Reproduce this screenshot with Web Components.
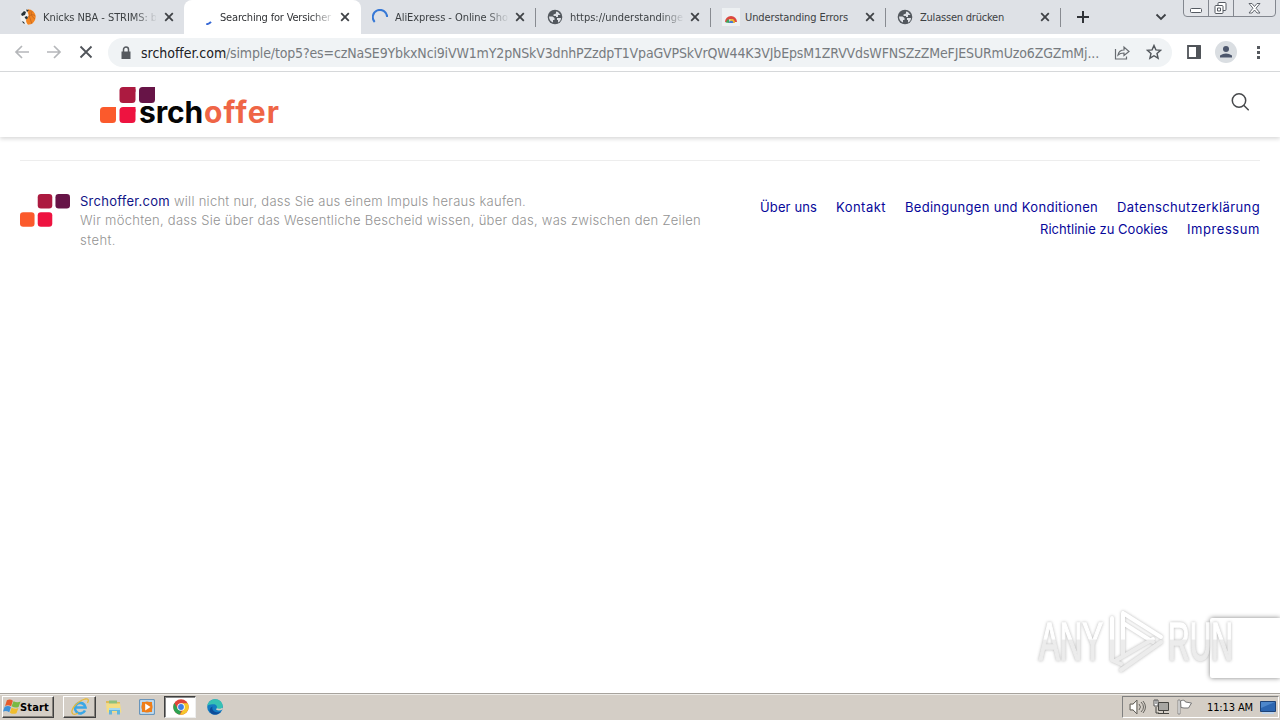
<!DOCTYPE html>
<html lang="de">
<head>
<meta charset="utf-8">
<title>srchoffer</title>
<style>
html, body { margin: 0; height: 100%; overflow: hidden; background: #fff; }
body { font-family: "DejaVu Sans Condensed", "DejaVu Sans", sans-serif; }
</style>
</head>
<body>
<desktop-screen></desktop-screen>
<script>
// shared drawings, used by several elements
const ICONS = {
    ball: `<svg width="16" height="16" viewBox="0 0 16 16"><circle cx="8" cy="8" r="7.7" fill="#f0f1f0"/><path d="M8 .3a7.7 7.7 0 0 1 0 15.4C5 12 6 10 8 8S6 3 8 .3z" fill="#f28522"/><path d="M1 5l3-3 2 1-1 3-3 1zM4.500 8 7 7l1 2-2 1.500zM2 12l2 1 1 2-2-1zM6 .6 9 1 7 3z" fill="#273338"/><path d="M10 1q-2 7 2 14M8 8q4-4 7.5-1M12 2q-2 5 3 8" fill="none" stroke="#b55e1c" stroke-width=".6"/></svg>`,
    load1: `<svg width="16" height="16" viewBox="0 0 16 16"><path d="M9.200 15.400q3-.6 4.800-2.600" fill="none" stroke="#3769d6" stroke-width="2"/></svg>`,
    load2: `<svg width="16" height="16" viewBox="0 0 16 16"><path d="M2.700 13A7.2 7.2 0 1 1 15.200 8" fill="none" stroke="#3678d6" stroke-width="2"/></svg>`,
    globe: `<svg width="16" height="16" viewBox="0 0 16 16"><circle cx="8" cy="8" r="7.3" fill="#53585e"/><path d="M2 7.500h3.500l2 1.500v2H6v2.500C3.500 12.500 2 10.500 2 7.500zM9 2.500l2 .5 2.500 3H11v2H9V7H6.500V5.500L9 4.500zM10 9h4c0 2.500-1.500 4-3 4.500V11h-1z" fill="#dee1e6"/></svg>`,
    rainbow: `<svg width="18" height="18" viewBox="0 0 18 18"><path fill="#edf0f2" d="M0 0h18v18H0z"/><path d="M3 14a6 6 0 0 1 12 0h-3a3 3 0 0 0-6 0z" fill="#dc4840"/><path d="M3.500 14.500 6 11q2 1 1.500 4z" fill="#3fa45b"/><path d="M7.500 11.500q5-2 5.500 3.500h-3z" fill="#edb72f"/><path d="M7 15a2.2 2.2 0 0 1 4.400 0z" fill="#477bd2"/></svg>`,
    chrome: `<svg width="16" height="16" viewBox="0 0 16 16"><circle cx="8" cy="8" r="7.7" fill="#e0453a"/><path d="M1.300 4.100 5 10.200 8 11.500 7 15.600A7.7 7.7 0 0 1 1.300 4.100z" fill="#2da252"/><path d="M8 4.200h6.700A7.7 7.7 0 0 1 7 15.600l4-6z" fill="#f6c72b"/><circle cx="8" cy="8" r="3.8" fill="#fff"/><circle cx="8" cy="8" r="2.9" fill="#3f7fe5"/></svg>`,
    ie: `<svg width="18" height="18" viewBox="0 0 18 18"><path d="M14 12.500A5.3 5.3 0 1 1 14.500 9.500H5" fill="none" stroke="#3ba7e6" stroke-width="2.600"/><path d="M2 16C-2 13 5 4 14 1q5-1 2.500 4M2 16q2 1 5-1" fill="none" stroke="#e5b93c" stroke-width="1.300"/></svg>`,
    folder: `<svg width="18" height="18" viewBox="0 0 18 18"><path d="M1 5V3h5l1 1h8v3z" fill="#dfbb57"/><path d="M4 2.500h8V6H4z" fill="#8cbf7c"/><path d="M1 5.500h14l1.500 9H2z" fill="#f4dd83"/><path d="M4 16.500V11h11v5.500h-3V13H7v3.500z" fill="#62b6dc"/><path d="M4 10h11v2H4z" fill="#a7d9ee"/></svg>`,
    media: `<svg width="16" height="16" viewBox="0 0 16 16"><path d="M.7.7h14.600v14.600H.7z" fill="#d6e9f7" stroke="#5187b6"/><path d="M2.500 2.500h11v11h-11z" fill="#94bee0"/><path d="M3 3h10v10H3z" fill="#ef7e19"/><circle cx="8" cy="8" r="5.600" fill="#ef7e19"/><path d="m6.200 4.500 5.300 3.500-5.300 3.500z" fill="#fff"/></svg>`,
    edge: `<svg width="18" height="18" viewBox="0 0 18 18"><circle cx="9" cy="9" r="7.800" fill="#147cc2"/><path d="M1.300 8C2 3.500 6 .9 10 1.300c4 .5 7 3.700 6.700 7.200-.2 2.600-3.700 4-6.300 2.600 1.400-2 .2-4.300-2-4.800C5 5.800 2.500 6.500 1.300 8z" fill="#36c2b4"/><path d="M6.500 8.500c-1.200 4 3 7.500 8.500 5-3 4.300-9 3.800-11 .5-1-2 0-4.500 2.500-5.500z" fill="#0d4c9a"/><path d="M10.400 11.100q3.300 1.400 6.200-.8" stroke="#d4d0c8" stroke-width="1.600" fill="none"/></svg>`,
    flag: `<svg width="18" height="18" viewBox="0 0 18 18"><g transform="rotate(8 9 9)"><path d="M3 3q3-2 6-.4L8 8.500Q5 7 2 9z" fill="#e65b2c"/><path d="M9.700 3q4 1.500 7-.7L15.500 8q-3 2-7 .4z" fill="#79b943"/><path d="M1.700 9.700q4-2 6.300-.3l-1 5.300q-3-1.700-6.300 0z" fill="#3f91d8"/><path d="M8.700 9.500q4 1.500 6.800-.4l-1.200 5.400q-3 2-6.600.4z" fill="#f0bd2e"/></g></svg>`
};

function make(name, css, html) {
    customElements.define(name, class extends HTMLElement {
        constructor() {
            super();
            this.attachShadow({mode: 'open'});
            this.shadowRoot.innerHTML = `<style>:host { display: block; box-sizing: border-box; } ${css}</style>${html}`;
        }
    });
}

// text run with a set width, spread with letter spacing
class FitText extends HTMLElement {
    constructor() {
        super();
        this.attachShadow({mode: 'open'});
        this.shadowRoot.innerHTML = `<style>
        :host { display: inline-block; white-space: pre; }
        span { display: inline-block; }
        </style><span><slot></slot></span>`;
    }

    connectedCallback() {
        const wanted = Number(this.getAttribute('w'));
        const span = this.shadowRoot.querySelector('span');
        const extra = wanted - span.getBoundingClientRect().width;
        span.style.letterSpacing = (extra / this.textContent.length) + 'px';
        this.style.width = wanted + 'px';
    }
}

class ShapeIcon extends HTMLElement {
    constructor() {
        super();
        this.attachShadow({mode: 'open'});
    }

    connectedCallback() {
        this.shadowRoot.innerHTML = `<style>:host { display: inline-flex; } svg { display: block; }</style>${ICONS[this.getAttribute('name')]}`;
    }
}

class BrowserTab extends HTMLElement {
    constructor() {
        super();
        this.attachShadow({mode: 'open'});
        this.shadowRoot.innerHTML = `<style>
        :host { display: flex; align-items: center; box-sizing: border-box; flex: none; width: 175px; height: 34px; padding: 0 9px 0 12px; position: relative; font-size: 11px; color: #3c4043; }
        :host([first]) { width: 176px; }
        :host([active]) { width: 177px; padding: 0 10px 0 13px; background: #fff; border-radius: 8px 8px 0 0; color: #303235; }
        :host([next]) { width: 174px; padding-left: 11px; }
        :host([line])::after { content: ""; position: absolute; right: -1px; top: 8px; width: 1px; height: 19px; background: #888b91; }
        .icon { width: 18px; flex: none; display: flex; }
        .title { margin-left: 5px; width: 113px; flex: none; overflow: hidden; white-space: nowrap; line-height: 18px; padding-top: 1px; }
        :host([fade]) .title { -webkit-mask-image: linear-gradient(90deg, #000 80%, #0001 100%); mask-image: linear-gradient(90deg, #000 80%, #0001 100%); }
        .close { margin-left: auto; margin-right: 1px; }
        </style>
        <div class="icon"><slot name="icon"></slot></div>
        <div class="title"><slot></slot></div>
        <svg class="close" width="10" height="10" viewBox="0 0 10 10"><path d="m1.200 1.200 7.600 7.600m0-7.600L1.200 8.800" stroke="#3f4246" stroke-width="1.800"/></svg>`;
    }
}

customElements.define('fit-text', FitText);
customElements.define('shape-icon', ShapeIcon);
customElements.define('browser-tab', BrowserTab);

make('window-buttons', `
:host { position: absolute; right: 4px; top: 0; width: 93px; height: 17px; }
svg { display: block; }`, `
<svg width="93" height="17" viewBox="0 0 93 17"><path d="M.5 0v13q0 3.500 3.500 3.500h85q3.500 0 3.500-3.500V0M25.500 0v16M50.500 0v16" fill="#e3e5e9" stroke="#83878f"/>
<g fill="#fff" stroke="#555a62"><rect x="7.500" y="8.500" width="11" height="4" rx="1"/><rect x="35" y="2.500" width="8" height="8" rx="1"/><rect x="32" y="5.500" width="8" height="8" rx="1"/><path d="M34.500 8h3v3h-3z"/><path d="M66 3.500h3l2.500 3 2.500-3h3l-4 4.700 4 4.800h-3L71.500 10 69 13h-3l4-4.800z" stroke-width=".9"/></g></svg>`);

make('tab-strip', `
:host { display: flex; height: 34px; padding-left: 8px; background: #dee1e6; position: relative; }
.plus { margin: 10px 0 0 16px; }
.down { margin: 13px 0 0 65px; }`, `
<browser-tab first fade><shape-icon slot="icon" name="ball"></shape-icon><fit-text w="114">Knicks NBA - STRIMS: b</fit-text></browser-tab>
<browser-tab active fade><shape-icon slot="icon" name="load1"></shape-icon><fit-text w="111">Searching for Versicher</fit-text></browser-tab>
<browser-tab next line fade><shape-icon slot="icon" name="load2"></shape-icon><fit-text w="113">AliExpress - Online Sho</fit-text></browser-tab>
<browser-tab line fade><shape-icon slot="icon" name="globe"></shape-icon><fit-text w="113">https://understandinge</fit-text></browser-tab>
<browser-tab line><shape-icon slot="icon" name="rainbow"></shape-icon><fit-text w="103">Understanding Errors</fit-text></browser-tab>
<browser-tab line><shape-icon slot="icon" name="globe"></shape-icon><fit-text w="84">Zulassen drücken</fit-text></browser-tab>
<svg class="plus" width="14" height="14"><path d="M7 1v12M1 7h12" stroke="#303338" stroke-width="2"/></svg>
<svg class="down" width="12" height="9"><path d="m1.500 1.500 4.500 4.500 4.500-4.500" fill="none" stroke="#3d4045" stroke-width="1.800"/></svg>
<window-buttons></window-buttons>`);

make('address-bar', `
:host { display: flex; align-items: center; height: 29px; width: 1064px; border-radius: 15px; background: #f0f3f5; padding-left: 12px; color: #777b7f; font-size: 14px; flex: none; }
.url { display: flex; margin-left: 9px; line-height: 20px; width: 959px; }
.host { color: #202124; }
.share { margin-left: 14px; }
.star { margin-left: 15px; position: relative; top: -1px; }`, `
<svg width="12" height="14" viewBox="0 0 12 14"><path d="M1.500 5.500h9V13h-9z" fill="#55595e"/><path d="M3.500 6V3.500a2.500 2.500 0 0 1 5 0V6" fill="none" stroke="#55595e" stroke-width="1.500"/></svg>
<div class="url"><fit-text class="host" w="85">srchoffer.com</fit-text><fit-text w="873">/simple/top5?es=czNaSE9YbkxNci9iVW1mY2pNSkV3dnhPZzdpT1VpaGVPSkVrQW44K3VJbEpsM1ZRVVdsWFNSZzZMeFJESURmUzo6ZGZmMj...</fit-text></div>
<svg class="share" width="17" height="16" viewBox="0 0 17 16"><path d="M1.500 4v10h11v-2.500M4 10q1-5 6-5V2l5 4.500-5 4V8Q6 8 4 10z" fill="none" stroke="#686c71" stroke-width="1.200"/></svg>
<svg class="star" width="16" height="16" viewBox="0 0 16 16"><path d="m8 1.500 1.900 4.400 4.800.4-3.700 3.200 1.100 4.700L8 11.700l-4.100 2.500L5 9.500 1.300 6.300l4.800-.4z" fill="none" stroke="#51565b" stroke-width="1.400"/></svg>`);

make('browser-toolbar', `
:host { display: flex; align-items: center; height: 38px; background: #fff; border-bottom: 1px solid #d6d8da; padding-left: 14px; }
.nav { display: flex; gap: 16px; width: 94px; flex: none; position: relative; top: -1px; }
.panel { margin-left: 15px; position: relative; top: -1px; }
.user { margin-left: 14px; position: relative; top: -1px; }
.dots { margin-left: 19px; }`, `
<div class="nav">
<svg width="16" height="16"><path d="M15 8H2m6-6L2 8l6 6" fill="none" stroke="#b5b7ba" stroke-width="1.700"/></svg>
<svg width="16" height="16"><path d="M1 8h13M8 2l6 6-6 6" fill="none" stroke="#b5b7ba" stroke-width="1.700"/></svg>
<svg width="16" height="16"><path d="m2.500 2.500 11 11m0-11-11 11" stroke="#505459" stroke-width="1.800"/></svg>
</div>
<address-bar></address-bar>
<svg class="panel" width="14" height="14"><path d="M1 1h12v12H1z" fill="#fff" stroke="#505459" stroke-width="1.800"/><path d="M9 1h5v12H9z" fill="#505459"/></svg>
<svg class="user" width="22" height="22"><circle cx="11" cy="11" r="11" fill="#dadee2"/><circle cx="11" cy="8" r="3" fill="#4c566c"/><path d="M5 16.500v-2q6-4 12 0v2z" fill="#4c566c"/></svg>
<svg class="dots" width="5" height="16"><path d="M1 1h3v3H1zm0 5h3v3H1zm0 5h3v3H1z" fill="#55595e"/></svg>`);

make('square-mark', `
svg { display: block; width: 100%; height: auto; }
.cut { opacity: var(--cut, 0); }`, `
<svg viewBox="0 0 55 36"><g fill="#fb5a2c"><rect y="20" width="16" height="16" rx="3.500"/><path class="cut" d="M11 20h5v5z"/></g>
<g fill="#ee1340"><rect x="19.500" y="20" width="16" height="16" rx="3.500"/><path class="cut" d="M30.500 20h5v5z"/></g>
<g fill="#ac1a40"><rect x="19.500" width="16" height="16" rx="3.500"/><path class="cut" d="M30.500 0h5v5z"/></g>
<g fill="#671447"><rect x="39" width="16" height="16" rx="3.500"/><path class="cut" d="M50 0h5v5z"/></g></svg>`);

make('site-logo', `
:host { position: relative; width: 180px; height: 37px; --cut: 1; }
square-mark { width: 55px; }
.name { position: absolute; left: 39px; top: 7px; font: 700 30px/36px Inter, sans-serif; display: flex; color: #050505; }
.offer { color: #ef6546; margin-left: 1px; }`, `
<square-mark></square-mark><div class="name"><fit-text w="64">srch</fit-text><fit-text class="offer" w="76">offer</fit-text></div>`);

make('site-header', `
:host { display: flex; justify-content: space-between; height: 65px; padding: 15px 31px 0 100px; background: #fff; box-shadow: 0 2px 4px #00000026; position: relative; }
.search { margin-top: 5px; }`, `
<site-logo></site-logo><svg class="search" width="19" height="20"><circle cx="9" cy="8.500" r="6.700" fill="none" stroke="#47494c" stroke-width="1.500"/><path d="m13.700 13.300 5 5" stroke="#47494c" stroke-width="1.500"/></svg>`);

make('site-footer', `
:host { display: flex; margin: 23px 20px 0; border-top: 1px solid #ededed; padding-top: 31px; font: 300 13px/19.4px Inter, sans-serif; color: #939393; }
square-mark { width: 50px; margin: 2px 10px 0 0; flex: none; }
.about { width: 640px; flex: none; }
.about div { height: 19.4px; white-space: nowrap; }
.brand, .links { color: #07079a; font-weight: 400; }
.brand { color: #101487; }
.links { margin: 6px 0 0 auto; display: grid; align-content: start; gap: 2px; justify-items: end; }
.links div { display: flex; gap: 19px; height: 20px; }`, `
<square-mark></square-mark>
<div class="about"><div><fit-text class="brand" w="90">Srchoffer.com</fit-text><fit-text w="356"> will nicht nur, dass Sie aus einem Impuls heraus kaufen.</fit-text></div>
<div><fit-text w="621">Wir möchten, dass Sie über das Wesentliche Bescheid wissen, über das, was zwischen den Zeilen</fit-text></div>
<div><fit-text w="36">steht.</fit-text></div></div>
<div class="links"><div><fit-text w="57">Über uns</fit-text><fit-text w="50">Kontakt</fit-text><fit-text w="193">Bedingungen und Konditionen</fit-text><fit-text w="143">Datenschutzerklärung</fit-text></div>
<div><fit-text w="128">Richtlinie zu Cookies</fit-text><fit-text w="73">Impressum</fit-text></div></div>`);

// the badge in the corner and the watermark lie over the page
make('corner-overlay', `
:host { position: absolute; right: 0; bottom: 8px; width: 250px; height: 90px; }
.badge { position: absolute; right: 0; bottom: 7px; width: 70px; height: 60px; background: #fff; box-shadow: 0 0 5px #808080; border-radius: 2px 0 0 2px; }
svg { position: absolute; left: 0; top: 0; filter: drop-shadow(0 0 1.500px #aaa); opacity: .85; }
text { font: 400 53px "Liberation Sans Narrow", "Liberation Sans", sans-serif; fill: url(#fade); stroke: url(#fade); stroke-width: 1.500px; }`, `
<div class="badge"></div>
<svg width="250" height="90" viewBox="0 0 250 90"><defs><linearGradient id="fade" gradientUnits="userSpaceOnUse" x1="0" y1="0" x2="0" y2="90"><stop offset=".49" stop-color="#fff"/><stop offset=".5" stop-color="#e9e9e9"/></linearGradient></defs>
<text x="9" y="65" textLength="64" lengthAdjust="spacingAndGlyphs">ANY</text><text x="138" y="65" textLength="65" lengthAdjust="spacingAndGlyphs">RUN</text>
<g fill="none" stroke="url(#fade)" stroke-width="4" stroke-linejoin="round" stroke-linecap="round"><path d="M93 18v43M93 18l38 24M93 28l30 19"/><path d="M82 23v42l9 4M91 75l40-28M85 66l38-22"/></g></svg>`);

make('web-page', `
:host { flex: 1; position: relative; background: #fff; overflow: hidden; }`, `
<site-header></site-header><site-footer></site-footer><corner-overlay></corner-overlay>`);

make('system-tray', `
:host { display: flex; align-items: center; width: 157px; height: 22px; margin-left: auto; padding-left: 6px; border: 1px solid; border-color: #808080 #fff #fff #808080; font-size: 11px; color: #000; }
.net { margin-left: 6px; } .note { margin-left: 7px; } fit-text { margin-left: 13px; } .desk { margin-left: 7px; }`, `
<svg width="18" height="16"><path d="M1 5h3l4-4v14l-4-4H1zM10 5q3 3 0 6m2-8q5 5 0 10m2-11q5 6 0 12" fill="none" stroke="#66645f"/><path d="M2 6h2l3-3v10l-3-3H2z" fill="#fff"/></svg>
<svg class="net" width="17" height="16"><path d="M5.500 3.500h10v8h-10z" fill="#a7a6a2" stroke="#454440"/><path d="M5 14.500h11M10.500 12v2M3 8v6h3" stroke="#454440" fill="none"/><path d="M1 1h4v6H1z" fill="#fff" stroke="#555"/><path d="M3 1v4" stroke="#555"/></svg>
<svg class="note" width="17" height="16"><path d="M1 1h2v14H1z" fill="#fff" stroke="#777" stroke-width=".8"/><path d="M3.500 2q4-2 5 1l6 1-3 5H7l-3-.500z" fill="#fff" stroke="#777"/></svg>
<fit-text w="46">11:13 AM</fit-text>
<svg class="desk" width="16" height="13"><path d="M.500.500h15v10H.500z" fill="#2c66b1" stroke="#1e4377"/><path d="M1 1h14L1 7z" fill="#4d87cb"/><path d="M2 11h12v2H2z" fill="#bdd3eb"/></svg>`);

make('task-bar', `
:host { display: flex; align-items: center; height: 27px; padding: 1px 1px 1px 2px; background: #d4cec6; border-top: 1px solid #a7a39d; box-shadow: inset 0 1px #eeece8; flex: none; }
.start, .raised, .pressed { box-sizing: border-box; height: 22px; border: 1px solid; display: flex; align-items: center; }
.start, .raised { border-color: #fff #404040 #404040 #fff; box-shadow: inset -1px -1px #85817b; }
.start { width: 52px; font: 700 11px "DejaVu Sans Condensed", sans-serif; }
.start fit-text { margin-left: -1px; }
.raised { width: 33px; margin-left: 9px; justify-content: center; }
.pressed { width: 32px; margin-left: 10px; padding-left: 1px; justify-content: center; background: #fff; border-color: #404040 #eee #eee #404040; box-shadow: inset 1px 1px #888; }
.folder { margin-left: 9px; } .media { margin-left: 16px; } .pressed { margin-left: 9px; } .edge { margin-left: 10px; }`, `
<div class="start"><shape-icon name="flag"></shape-icon><fit-text w="29">Start</fit-text></div>
<div class="raised"><shape-icon name="ie"></shape-icon></div>
<shape-icon class="folder" name="folder"></shape-icon><shape-icon class="media" name="media"></shape-icon>
<div class="pressed"><shape-icon name="chrome"></shape-icon></div><shape-icon class="edge" name="edge"></shape-icon>
<system-tray></system-tray>`);

make('desktop-screen', `
:host { display: flex; flex-direction: column; width: 1280px; height: 720px; overflow: hidden; }`, `
<tab-strip></tab-strip><browser-toolbar></browser-toolbar><web-page></web-page><task-bar></task-bar>`);
</script>
</body>
</html>
